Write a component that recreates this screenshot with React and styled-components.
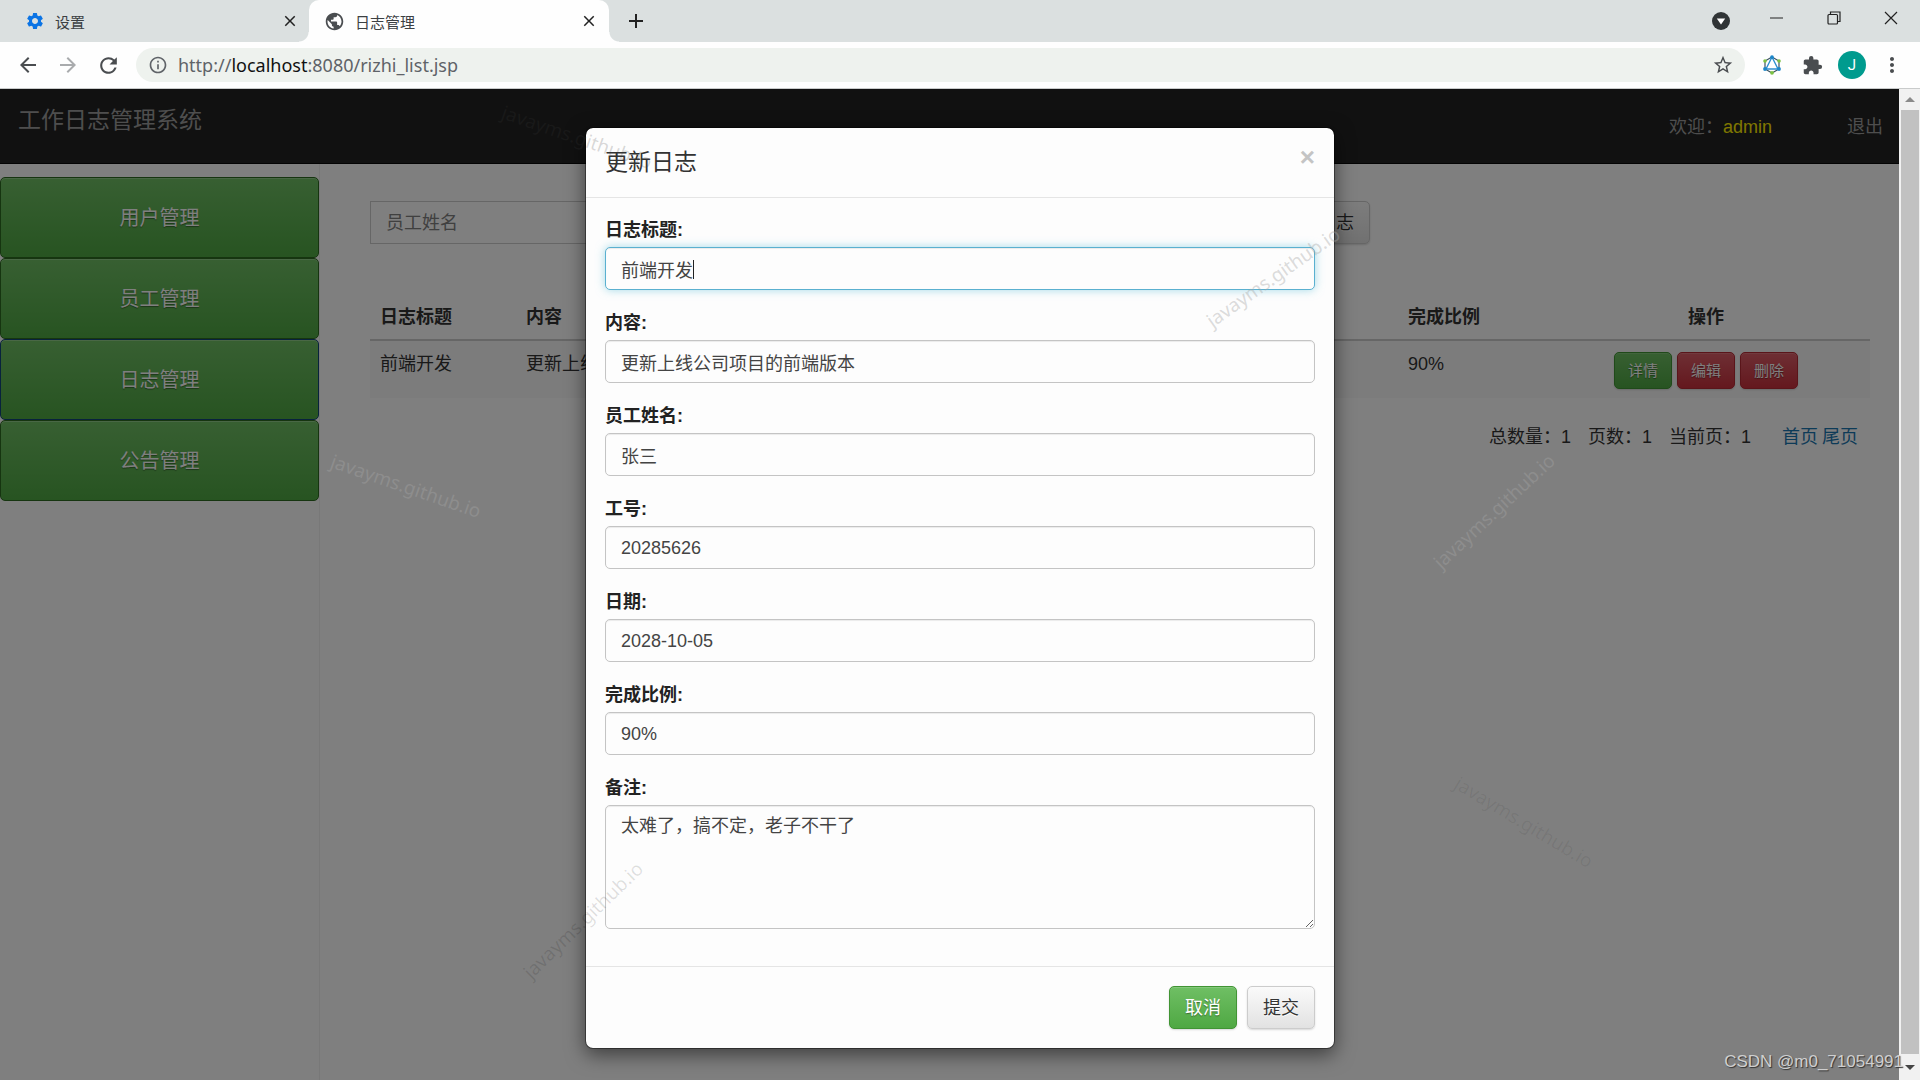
import styled, { createGlobalStyle, css } from "styled-components";
import {
  MdAdd,
  MdArrowBack,
  MdArrowForward,
  MdClose,
  MdExtension,
  MdInfoOutline,
  MdMoreVert,
  MdPublic,
  MdRefresh,
  MdSettings,
  MdStarBorder,
} from "react-icons/md";

const GlobalStyle = createGlobalStyle`
  * {
    box-sizing: border-box;
  }
  body {
    margin: 0;
    font-family: "Liberation Sans", "Noto Sans CJK SC", sans-serif;
    font-size: 18px;
    line-height: 25px;
    color: #333;
    background: #fff;
  }
  button, input, textarea {
    font-family: inherit;
    font-size: inherit;
    line-height: inherit;
    margin: 0;
  }
  button {
    cursor: pointer;
  }
`;

const Window = styled.div`
  display: flex;
  flex-direction: column;
  height: 100vh;
  overflow: hidden;
`;

/* browser frame */

const TabStrip = styled.div`
  display: flex;
  align-items: stretch;
  height: 42px;
  flex: none;
  background: #dbe0e0;
`;

const Tab = styled.div`
  display: flex;
  align-items: center;
  gap: 10px;
  width: ${(props) => (props.$active ? "300px" : "309px")};
  padding: 0 10px 0 ${(props) => (props.$active ? "15px" : "25px")};
  font: 15px/20px "Open Sans", "Noto Sans CJK SC", sans-serif;
  color: #3c4043;
  ${(props) =>
    props.$active &&
    css`
      position: relative;
      background: #fefefe;
      border-radius: 10px 10px 0 0;
      &::before,
      &::after {
        content: "";
        position: absolute;
        bottom: 0;
        width: 10px;
        height: 10px;
      }
      &::before {
        right: 100%;
        background: radial-gradient(circle at 0 0, transparent 9px, #fefefe 10px);
      }
      &::after {
        left: 100%;
        background: radial-gradient(circle at 100% 0, transparent 9px, #fefefe 10px);
      }
    `}
  span {
    flex: 1;
    padding-top: 1px;
  }
`;

const IconBtn = styled.button`
  display: flex;
  align-items: center;
  justify-content: center;
  flex: none;
  width: ${(props) => props.$w || 40}px;
  height: ${(props) => props.$h || 34}px;
  padding: 0;
  border: 0;
  background: none;
  color: ${(props) => props.$color || "#4a4d50"};
`;

const NewTab = styled(IconBtn)`
  margin-left: 9px;
  align-self: center;
`;

const WindowControls = styled.div`
  display: flex;
  margin-left: auto;
  height: 36px;
`;

const Toolbar = styled.div`
  display: flex;
  align-items: center;
  height: 47px;
  flex: none;
  padding: 0 8px;
  background: #fefefe;
  border-bottom: 1px solid #c9cbcb;
`;

const AddressBar = styled.div`
  display: flex;
  align-items: center;
  flex: 1;
  height: 34px;
  margin: 0 7px 0 8px;
  padding: 0 2px 0 12px;
  border-radius: 17px;
  background: #eef2ee;
  color: #5f6368;
  font: 18px/24px "Noto Sans", sans-serif;
  b {
    font-weight: 400;
    color: #111;
  }
  span {
    flex: 1;
    padding-left: 10px;
  }
`;

const Avatar = styled.div`
  display: flex;
  align-items: center;
  justify-content: center;
  width: 28px;
  height: 28px;
  border-radius: 50%;
  background: #009b8e;
  color: #fff;
  font: 15px/20px Roboto, sans-serif;
`;

const Viewport = styled.div`
  position: relative;
  display: flex;
  flex: 1;
  min-height: 0;
`;

const Scrollbar = styled.div`
  display: flex;
  flex-direction: column;
  width: 21px;
  background: #f1f1f1;
  padding: 0 1px 0 2px;
`;

const ScrollThumb = styled.div`
  flex: 1;
  background: #c1c1c1;
`;

const ScrollArrow = styled.div`
  display: flex;
  align-items: center;
  justify-content: center;
  height: ${(props) => props.$h}px;
`;

/* page */

const Page = styled.div`
  position: relative;
  display: flex;
  flex-direction: column;
  flex: 1;
  min-width: 0;
`;

const Navbar = styled.header`
  display: flex;
  height: 75px;
  flex: none;
  padding: 17px 16px 0 18px;
  background: #222;
  border-bottom: 1px solid #080808;
  color: #9d9d9d;
  h1 {
    margin: 0;
    font-size: 23px;
    line-height: 28px;
    font-weight: 400;
  }
`;

const NavRight = styled.div`
  display: flex;
  gap: 75px;
  margin-left: auto;
  padding-top: 9px;
  em {
    font-style: normal;
    color: #ffee00;
  }
  a {
    color: inherit;
    text-decoration: none;
  }
`;

const Columns = styled.div`
  display: flex;
  flex: 1;
`;

const Sidebar = styled.nav`
  display: flex;
  flex-direction: column;
  width: 320px;
  flex: none;
  padding-top: 13px;
  border-right: 1px solid #f1f1f1;
`;

const variants = {
  success: ["#6fbf64", "#4fa843", "#419434", "#fff", "0 1px 1px rgba(0,0,0,.4)"],
  danger: ["#dc5e68", "#c9303c", "#b52b35", "#fff", "0 1px 1px rgba(0,0,0,.4)"],
  default: ["#fafafa", "#e2e2e2", "#ccc", "#333", "0 1px 0 #fff"],
};

const Button = styled.button`
  height: 43px;
  padding: 1px 15px 0;
  border-radius: 5px;
  border: 1px solid ${(props) => variants[props.$variant][2]};
  background: linear-gradient(
    ${(props) => variants[props.$variant][0]},
    ${(props) => variants[props.$variant][1]}
  );
  color: ${(props) => variants[props.$variant][3]};
  text-shadow: ${(props) => variants[props.$variant][4]};
  box-shadow: inset 0 1px 0 rgba(255, 255, 255, 0.15),
    0 1px 2px rgba(0, 0, 0, 0.15);
`;

const MenuButton = styled(Button)`
  height: 81px;
  padding-top: 2px;
  font-size: 20px;
  border-color: ${(props) => (props.$current ? "#10447a" : "#2c6a20")};
  box-shadow: inset 0 1px 0 rgba(255, 255, 255, 0.25);
`;

const SmallButton = styled(Button)`
  height: 37px;
  padding: 0 13px;
  font-size: 15px;
`;

const Main = styled.main`
  flex: 1;
  min-width: 0;
  padding: 37px 29px 0 50px;
`;

const SearchGroup = styled.form`
  display: flex;
  width: 1000px;
  max-width: 100%;
  input {
    flex: 1;
    height: 43px;
    padding: 2px 15px 0;
    border: 1px solid #ccc;
    background: #fff;
    color: #555;
    &::placeholder {
      color: #808080;
      opacity: 1;
    }
  }
`;

const Table = styled.table`
  width: 100%;
  margin-top: 50px;
  border-collapse: collapse;
  table-layout: fixed;
  th,
  td {
    padding: 11px 10px 9px;
    text-align: left;
    vertical-align: top;
    white-space: nowrap;
  }
  th {
    border-bottom: 2px solid #ccc;
  }
  td {
    background: #f9f9f9;
  }
  th:last-child,
  td:last-child {
    text-align: center;
  }
`;

const Actions = styled.div`
  display: flex;
  justify-content: center;
  gap: 5px;
`;

const Pager = styled.div`
  display: flex;
  justify-content: flex-end;
  gap: 17px;
  padding: 27px 12px 0 0;
`;

const PagerLinks = styled.div`
  display: flex;
  gap: 4px;
  padding-left: 14px;
  a {
    color: #1a76b0;
    text-decoration: none;
  }
`;

const Backdrop = styled.div`
  position: absolute;
  inset: 0;
  background: rgba(0, 0, 0, 0.5);
`;

/* modal */

const Overlay = styled.div`
  position: absolute;
  inset: 0;
  display: flex;
  justify-content: center;
  align-items: flex-start;
  padding-top: 38px;
`;

const Modal = styled.div`
  width: 750px;
  background: #fdfdfd;
  background-clip: padding-box;
  border: 1px solid rgba(0, 0, 0, 0.4);
  border-radius: 8px;
  box-shadow: 0 6px 19px rgba(0, 0, 0, 0.5);
`;

const ModalHeader = styled.div`
  display: flex;
  justify-content: space-between;
  align-items: flex-start;
  height: 70px;
  padding: 17px 19px 0;
  border-bottom: 1px solid #e5e5e5;
  h2 {
    margin: 0;
    font-size: 23px;
    line-height: 34px;
    font-weight: 400;
  }
`;

const CloseButton = styled.button`
  padding: 0;
  border: 0;
  background: none;
  font-size: 26px;
  line-height: 25px;
  font-weight: 700;
  color: #c4c4c4;
`;

const ModalBody = styled.div`
  display: flex;
  flex-direction: column;
  gap: 19px;
  padding: 18px 19px 37px;
`;

const Field = styled.div`
  position: relative;
  display: flex;
  flex-direction: column;
  gap: 4px;
  label {
    padding-top: 2px;
    font-weight: 700;
    color: #222;
  }
`;

const control = css`
  width: 100%;
  border: 1px solid #c4c4c4;
  border-radius: 5px;
  background: #fdfdfd;
  color: #444;
  outline: 0;
  box-shadow: inset 0 1px 1px rgba(0, 0, 0, 0.075);
`;

const Input = styled.input`
  ${control}
  height: 43px;
  padding: 1px 15px 0;
  caret-color: transparent;
  ${(props) =>
    props.$focused &&
    css`
      border-color: #5ab0d0;
      box-shadow: inset 0 1px 1px rgba(0, 0, 0, 0.075),
        0 0 10px rgba(102, 195, 220, 0.6);
    `}
`;

const Caret = styled.i`
  position: absolute;
  left: 88px;
  bottom: 11px;
  width: 1px;
  height: 19px;
  background: #222;
`;

const TextArea = styled.textarea`
  ${control}
  display: block;
  height: 124px;
  padding: 8px 15px;
  resize: vertical;
`;

const ModalFooter = styled.div`
  display: flex;
  justify-content: flex-end;
  gap: 10px;
  padding: 19px;
  border-top: 1px solid #e5e5e5;
`;

const Watermark = styled.span`
  position: absolute;
  left: ${(props) => props.$x}px;
  top: ${(props) => props.$y}px;
  transform: translate(-50%, -50%) rotate(${(props) => props.$angle}deg);
  font: 19px/24px "Noto Sans", sans-serif;
  color: ${(props) => props.$color || "rgba(165, 165, 165, 0.4)"};
  pointer-events: none;
`;

const Credit = styled.span`
  position: absolute;
  right: 17px;
  bottom: 6px;
  font-size: 17px;
  line-height: 24px;
  color: #cfcfcf;
  text-shadow: 1px 1px 1px #333;
`;

const HexLogo = () => (
  <svg width="20" height="20" viewBox="0 0 20 20">
    <path d="M10 2l7 4v8l-7 4-7-4V6z" fill="none" stroke="#3b5360" strokeWidth="1.2" />
    <path d="M10 2L4 14h12z" fill="#fff" stroke="#2f8fd0" strokeWidth="1.4" />
    <g fill="#1c86c8">
      <circle cx="10" cy="2.2" r="1.9" />
      <circle cx="3" cy="14" r="1.9" />
      <circle cx="17" cy="14" r="1.9" />
    </g>
    <g fill="#7cc142">
      <circle cx="3" cy="6" r="1.8" />
      <circle cx="17" cy="6" r="1.8" />
      <circle cx="10" cy="17.8" r="1.9" />
    </g>
  </svg>
);

const menu = ["用户管理", "员工管理", "日志管理", "公告管理"];

const fields = [
  { id: "title", label: "日志标题:", value: "前端开发", focused: true },
  { id: "content", label: "内容:", value: "更新上线公司项目的前端版本" },
  { id: "name", label: "员工姓名:", value: "张三" },
  { id: "number", label: "工号:", value: "20285626" },
  { id: "date", label: "日期:", value: "2028-10-05" },
  { id: "ratio", label: "完成比例:", value: "90%" },
];

const watermarks = [
  { x: 406, y: 397, angle: 19 },
  { x: 1494, y: 422, angle: -43 },
  { x: 1273, y: 188, angle: -35 },
  { x: 1524, y: 733, angle: 31, color: "rgba(0, 0, 0, 0.07)" },
  { x: 583, y: 831, angle: -44, color: "rgba(0, 0, 0, 0.12)" },
  { x: 577, y: 48, angle: 19, color: "rgba(60, 60, 60, 0.2)" },
];

const BrowserFrame = () => (
  <>
    <TabStrip>
      <Tab>
        <MdSettings size={20} color="#0b74e5" />
        <span>设置</span>
        <IconBtn $w={18} aria-label="关闭">
          <MdClose size={18} color="#222" />
        </IconBtn>
      </Tab>
      <Tab $active>
        <MdPublic size={21} color="#4a4d50" />
        <span>日志管理</span>
        <IconBtn $w={20} aria-label="关闭">
          <MdClose size={18} color="#222" />
        </IconBtn>
      </Tab>
      <NewTab $w={36} aria-label="新标签页">
        <MdAdd size={24} color="#222" />
      </NewTab>
      <WindowControls>
        <IconBtn $w={56} $h={42} aria-label="搜索标签页">
          <svg width="18" height="18" viewBox="0 0 18 18">
            <circle cx="9" cy="9" r="9" fill="#303436" />
            <path d="M4.8 6.5h8.4L9 12.4z" fill="#fff" />
          </svg>
        </IconBtn>
        <IconBtn $w={56} $h={36} aria-label="最小化">
          <svg width="14" height="14" viewBox="0 0 14 14">
            <path d="M0 7h13" stroke="#222" />
          </svg>
        </IconBtn>
        <IconBtn $w={57} $h={36} aria-label="还原">
          <svg width="14" height="14" viewBox="0 0 14 14" fill="none" stroke="#222" strokeWidth="1.2">
            <rect x="1" y="3.5" width="9.5" height="9.5" rx="1" />
            <path d="M3.5 3.5V1H13v9.5h-2.500" />
          </svg>
        </IconBtn>
        <IconBtn $w={58} $h={36} aria-label="关闭窗口">
          <svg width="14" height="14" viewBox="0 0 14 14">
            <path d="M1 1l12 12M13 1L1 13" stroke="#222" strokeWidth="1.2" />
          </svg>
        </IconBtn>
      </WindowControls>
    </TabStrip>
    <Toolbar>
      <IconBtn aria-label="后退">
        <MdArrowBack size={24} />
      </IconBtn>
      <IconBtn $color="#a9abad" aria-label="前进">
        <MdArrowForward size={24} />
      </IconBtn>
      <IconBtn aria-label="刷新">
        <MdRefresh size={25} />
      </IconBtn>
      <AddressBar>
        <MdInfoOutline size={20} />
        <span>
          http://<b>localhost</b>:8080/rizhi_list.jsp
        </span>
        <IconBtn aria-label="收藏">
          <MdStarBorder size={22} />
        </IconBtn>
      </AddressBar>
      <IconBtn aria-label="扩展">
        <HexLogo />
      </IconBtn>
      <IconBtn aria-label="扩展程序">
        <MdExtension size={21} />
      </IconBtn>
      <IconBtn aria-label="用户">
        <Avatar>J</Avatar>
      </IconBtn>
      <IconBtn aria-label="菜单">
        <MdMoreVert size={24} />
      </IconBtn>
    </Toolbar>
  </>
);

const LogPage = () => (
  <Page>
    <Navbar>
      <h1>工作日志管理系统</h1>
      <NavRight>
        <span>
          欢迎：<em>admin</em>
        </span>
        <a href="#logout">退出</a>
      </NavRight>
    </Navbar>
    <Columns>
      <Sidebar>
        {menu.map((item) => (
          <MenuButton key={item} $variant="success" $current={item === "日志管理"}>
            {item}
          </MenuButton>
        ))}
      </Sidebar>
      <Main>
        <SearchGroup>
          <input type="text" placeholder="员工姓名" aria-label="员工姓名" />
          <Button type="button" $variant="default">
            添加日志
          </Button>
        </SearchGroup>
        <Table>
          <colgroup>
            <col style={{ width: 146 }} />
            <col style={{ width: 280 }} />
            <col />
            <col />
            <col />
            <col style={{ width: 144 }} />
            <col style={{ width: 328 }} />
          </colgroup>
          <thead>
            <tr>
              <th>日志标题</th>
              <th>内容</th>
              <th>员工姓名</th>
              <th>工号</th>
              <th>日期</th>
              <th>完成比例</th>
              <th>操作</th>
            </tr>
          </thead>
          <tbody>
            <tr>
              <td>前端开发</td>
              <td>更新上线公司项目的前端版本</td>
              <td>张三</td>
              <td>20285626</td>
              <td>2028-10-05</td>
              <td>90%</td>
              <td>
                <Actions>
                  <SmallButton $variant="success">详情</SmallButton>
                  <SmallButton $variant="danger">编辑</SmallButton>
                  <SmallButton $variant="danger">删除</SmallButton>
                </Actions>
              </td>
            </tr>
          </tbody>
        </Table>
        <Pager>
          <span>总数量：1</span>
          <span>页数：1</span>
          <span>当前页：1</span>
          <PagerLinks>
            <a href="#first">首页</a>
            <a href="#last">尾页</a>
          </PagerLinks>
        </Pager>
      </Main>
    </Columns>
    <Backdrop />
  </Page>
);

const UpdateModal = () => (
  <Overlay>
    <Modal role="dialog" aria-labelledby="modal-title">
      <ModalHeader>
        <h2 id="modal-title">更新日志</h2>
        <CloseButton aria-label="关闭">×</CloseButton>
      </ModalHeader>
      <ModalBody>
        {fields.map((field) => (
          <Field key={field.id}>
            <label htmlFor={field.id}>{field.label}</label>
            <Input id={field.id} type="text" defaultValue={field.value} $focused={field.focused} />
            {field.focused && <Caret />}
          </Field>
        ))}
        <Field>
          <label htmlFor="remark">备注:</label>
          <TextArea id="remark" defaultValue="太难了，搞不定，老子不干了" />
        </Field>
      </ModalBody>
      <ModalFooter>
        <Button $variant="success">取消</Button>
        <Button $variant="default">提交</Button>
      </ModalFooter>
    </Modal>
  </Overlay>
);

const App = () => {
  return (
    <Window>
      <GlobalStyle />
      <BrowserFrame />
      <Viewport>
        <LogPage />
        <Scrollbar>
          <ScrollArrow $h={21}>
            <svg width="10" height="5" viewBox="0 0 10 5">
              <path d="M0 5l5-5 5 5z" fill="#8a8a8a" />
            </svg>
          </ScrollArrow>
          <ScrollThumb />
          <ScrollArrow $h={26}>
            <svg width="10" height="5" viewBox="0 0 10 5">
              <path d="M0 0l5 5 5-5z" fill="#444" />
            </svg>
          </ScrollArrow>
        </Scrollbar>
        <UpdateModal />
        {watermarks.map((mark) => (
          <Watermark
            key={mark.x}
            $x={mark.x}
            $y={mark.y}
            $angle={mark.angle}
            $color={mark.color}
          >
            javayms.github.io
          </Watermark>
        ))}
        <Credit>CSDN @m0_71054991</Credit>
      </Viewport>
    </Window>
  );
};

export default App;
